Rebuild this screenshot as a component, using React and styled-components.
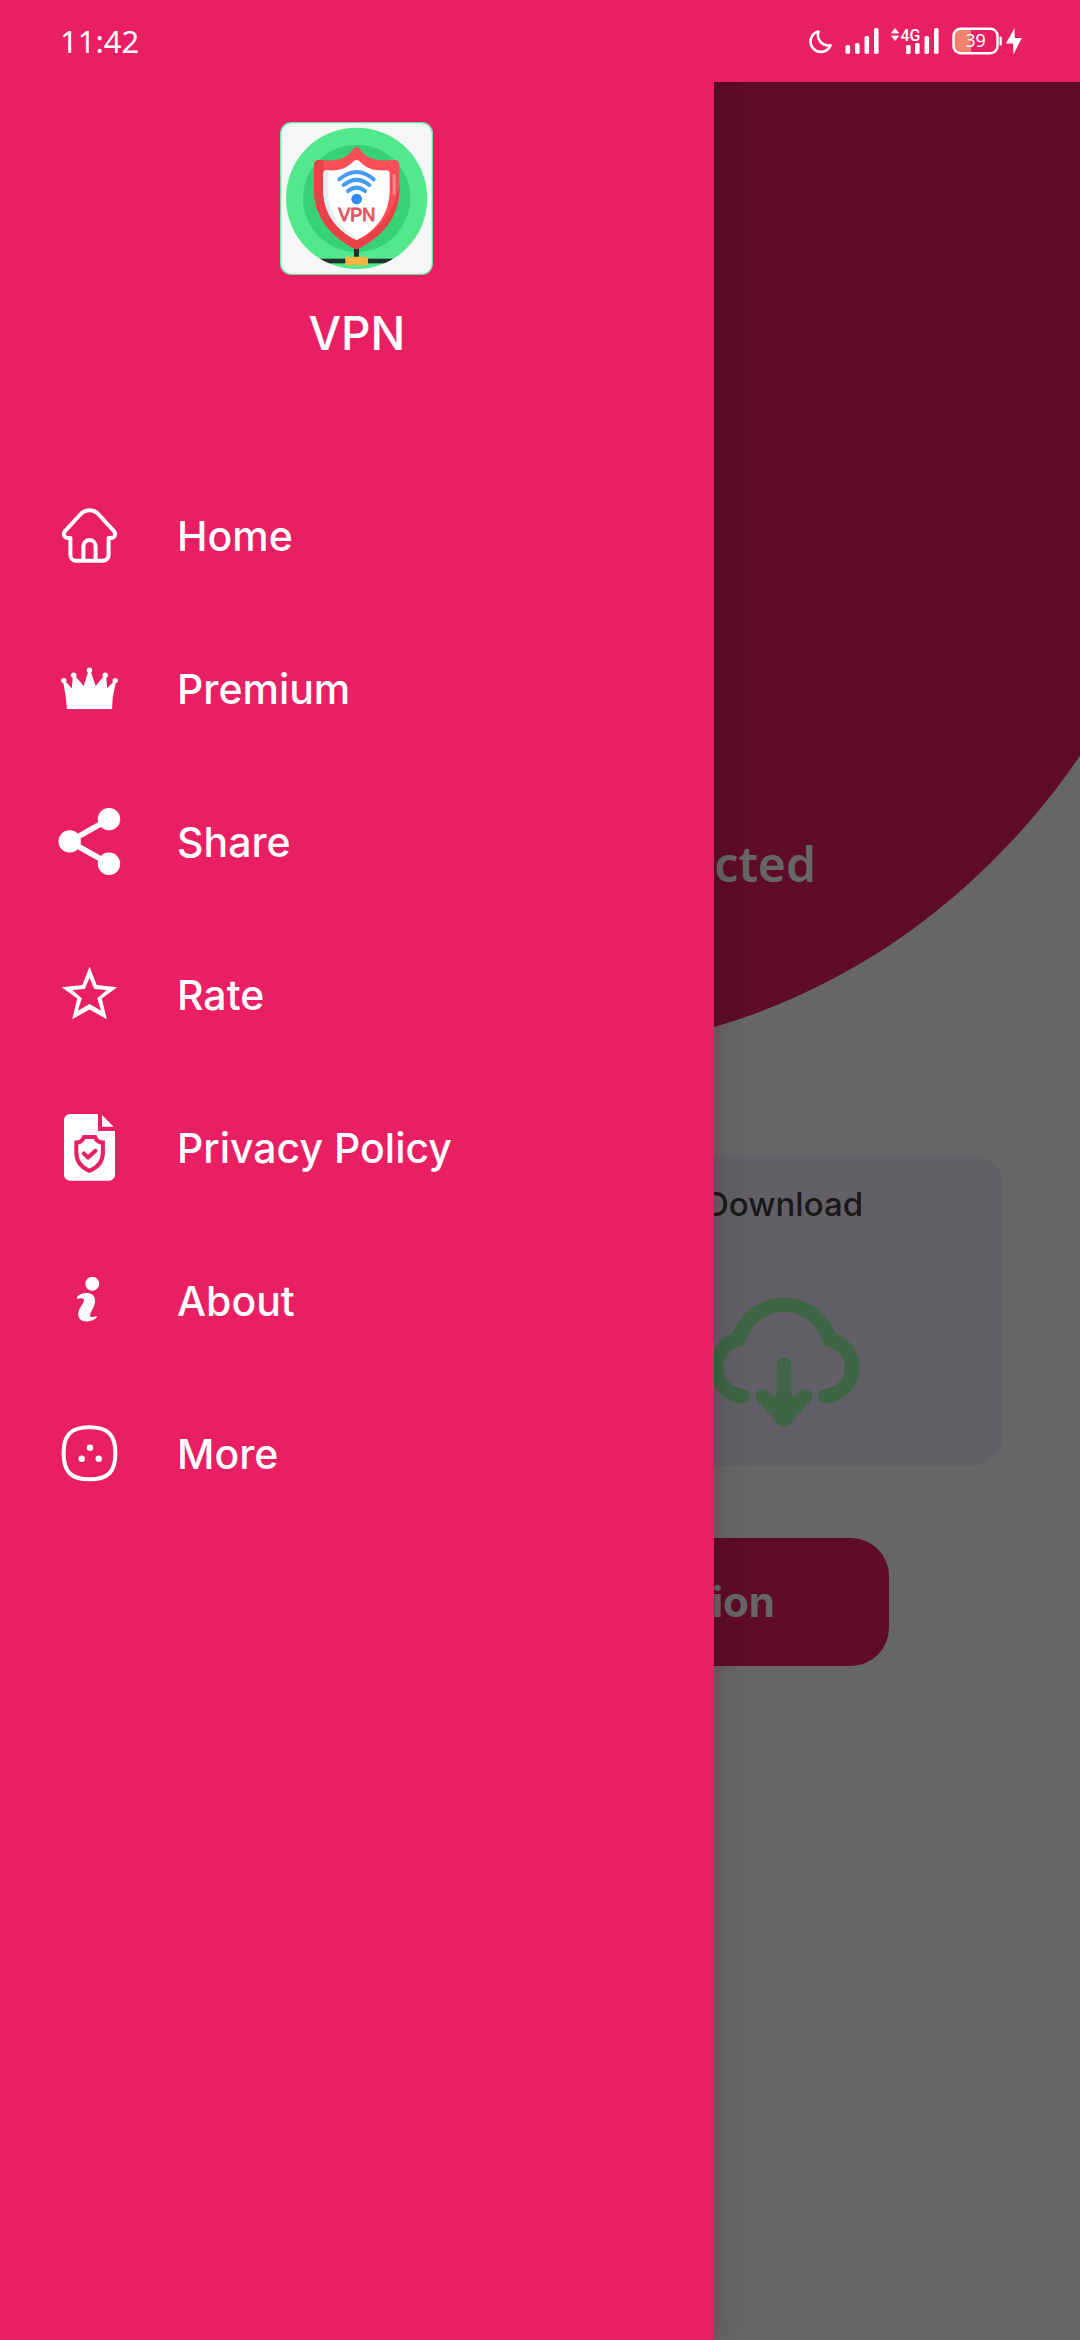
import React from 'react';
import styled, { createGlobalStyle } from 'styled-components';

const PINK = '#ea1e62';

const GlobalStyle = createGlobalStyle`
  *, *::before, *::after { box-sizing: border-box; }
  body {
    margin: 0;
    background: #fff;
    font-family: Inter, "Noto Sans", sans-serif;
  }
`;

const Page = styled.div`
  display: flex;
  flex-direction: column;
  min-height: 100vh;
`;

const StatusBar = styled.header`
  display: flex;
  align-items: center;
  justify-content: space-between;
  height: 82px;
  padding: 0 58px 0 60px;
  background: ${PINK};
  color: #fff;
  font-family: "Noto Sans", sans-serif;
  font-size: 31px;
`;

const StatusIcons = styled.div`
  display: flex;
  align-items: center;
  gap: 12px;
`;

const Power = styled.div`
  display: flex;
  align-items: center;
  gap: 4px;
`;

const Stage = styled.div`
  position: relative;
  display: flex;
  flex: 1;
  overflow: hidden;
`;

const Main = styled.main`
  flex: 1;
  min-width: 0;
`;

const Hero = styled.section`
  display: flex;
  flex-direction: column;
  justify-content: flex-end;
  height: 970px;
  margin: 0 -132px;
  padding: 0 396px 158px;
  border-radius: 0 0 50% 50% / 0 0 732px 732px;
  background: ${PINK};
`;

const HeroLabel = styled.p`
  margin: 0;
  color: #fff;
  font: 600 48px/60px "Noto Sans", sans-serif;
  text-align: right;
`;

const Cards = styled.section`
  display: grid;
  grid-template-columns: 1fr 1fr;
  gap: 50px;
  padding: 104px 77px 72px;
`;

const Card = styled.article`
  display: flex;
  flex-direction: column;
  align-items: center;
  gap: 73px;
  height: 310px;
  padding-top: 28px;
  border-radius: 30px;
  background: #f4f1ff;
`;

const CardTitle = styled.h2`
  margin: 0;
  color: #404040;
  font-size: 33px;
  font-weight: 500;
  line-height: 40px;
`;

const LocationButton = styled.button`
  display: flex;
  align-items: center;
  justify-content: flex-end;
  width: calc(100% - 382px);
  height: 128px;
  margin: 0 auto;
  padding: 0 114px;
  border: 0;
  border-radius: 38px;
  background: ${PINK};
  color: #fff;
  font: 700 42px/50px Inter, sans-serif;
  white-space: nowrap;
`;

const Scrim = styled.div`
  position: absolute;
  inset: 0;
  background: rgba(0, 0, 0, 0.6);
`;

const Drawer = styled.aside`
  position: absolute;
  top: 0;
  bottom: 0;
  left: 0;
  width: 66.1%;
  background: ${PINK};
  color: #fff;
  box-shadow: 0 0 32px rgba(0, 0, 0, 0.2);
`;

const Brand = styled.div`
  display: flex;
  flex-direction: column;
  align-items: center;
  gap: 28px;
  padding-top: 40px;
`;

const BrandName = styled.h1`
  margin: 0;
  font-size: 46px;
  font-weight: 500;
  line-height: 60px;
`;

const Menu = styled.nav`
  display: flex;
  flex-direction: column;
  padding-top: 96px;
`;

const MenuItem = styled.a`
  display: flex;
  align-items: center;
  gap: 54px;
  height: 153px;
  padding-left: 55px;
  color: inherit;
  font-size: 41px;
  font-weight: 500;
  line-height: 50px;
  text-decoration: none;
`;

function MenuIcon({ children }) {
  return (
    <svg width="68" height="68" viewBox="0 0 68 68" fill="none" stroke="#fff" strokeWidth="4" aria-hidden="true">
      {children}
    </svg>
  );
}

const items = [
  {
    label: 'Home',
    icon: (
      <>
        <path strokeLinejoin="round" d="M34.5 8.3C30.5 8.3 27.5 10 25.3 12.5L10 29.2C7.8 32 9 36 13 36h2.4v17.2a5.5 5.5 0 0 0 5.5 5.5h27.2a5.5 5.5 0 0 0 5.5-5.5V36H56c4 0 5.2-4 3-6.8L43.7 12.5C41.5 10 38.5 8.3 34.5 8.3Z" />
        <path d="M28.4 58V44.2a6.1 6.1 0 0 1 12.2 0V58" />
      </>
    ),
  },
  {
    label: 'Premium',
    icon: (
      <g fill="#fff" stroke="none">
        <path d="M12 54 10.6 41 8 26l1.6-.6 7.2 7.9L18 20h1.4l9.3 11 5-16h1.6l5.4 16 8.9-11h1.4l1.2 13.3 7.3-7.9 1.6.6-3.3 16L57 54Z" />
        <circle cx="8.8" cy="25.6" r="2.7" />
        <circle cx="18.7" cy="20.3" r="2.7" />
        <circle cx="34.5" cy="15.3" r="2.7" />
        <circle cx="50.3" cy="20.3" r="2.7" />
        <circle cx="60.2" cy="25.6" r="2.7" />
      </g>
    ),
  },
  {
    label: 'Share',
    icon: (
      <>
        <path strokeWidth="5.6" d="M54 11.2 14.7 33.4 54 55.8" />
        <g fill="#fff" stroke="none">
          <circle cx="14.7" cy="33.4" r="11.2" />
          <circle cx="54" cy="11.2" r="11.2" />
          <circle cx="54" cy="55.8" r="11.2" />
        </g>
      </>
    ),
  },
  {
    label: 'Rate',
    icon: (
      <path
        fill="#fff"
        stroke="none"
        fillRule="evenodd"
        d="M34.5 5.7 41.7 24 62.2 26.2 46.8 37.5 51.8 58.3 34.5 48.4 17.2 58.3 22.2 37.5 6.8 26.2 27.3 24ZM34.5 17 29.7 28 17.3 29 26.8 37.3 22.9 49.8 34.5 43 46.1 49.8 42.2 37.3 51.7 29 39.3 28Z"
      />
    ),
  },
  {
    label: 'Privacy Policy',
    icon: (
      <>
        <path fill="#fff" stroke="none" d="M15 0H43V17H60V60.7a6 6 0 0 1-6 6H15a6 6 0 0 1-6-6V6a6 6 0 0 1 6-6ZM47 1 58.7 12.7H47Z" />
        <path stroke={PINK} d="M29 23H40C41.2 26.3 44 28.5 47.9 28.5V38.5C47.9 47 42.5 53.5 34.5 56.8 26.5 53.5 21.3 47 21.3 38.5V28.5C25 28.5 27.8 26.3 29 23Z" />
        <path stroke={PINK} strokeLinecap="round" strokeLinejoin="round" d="M28.8 39.4 33 43.6 40.5 36.8" />
      </>
    ),
  },
  {
    label: 'About',
    icon: (
      <g fill="#fff" stroke="none">
        <circle cx="37.3" cy="16.7" r="7" />
        <path d="M22 32C21.5 28.5 26 26 32 26 38 26 40.5 30 40 35 39.5 40 36 44 35 48 34.6 50.8 38.5 50.3 41.5 49 43.5 50.5 37 54.5 32 54.5 26 54.5 22.8 51 23.3 46 24 41 28 38 29 33.5 29 30.5 25 31 22 32Z" />
      </g>
    ),
  },
  {
    label: 'More',
    icon: (
      <>
        <path d="M34.5 7.3C53 7.3 60.4 14.8 60.4 33.3S53 59.3 34.5 59.3 8.6 51.8 8.6 33.3 16 7.3 34.5 7.3Z" />
        <g fill="#fff" stroke="none">
          <circle cx="35" cy="27.7" r="3.2" />
          <circle cx="26.7" cy="38.7" r="3.2" />
          <circle cx="43.7" cy="38.7" r="3.2" />
        </g>
      </>
    ),
  },
];

function Logo() {
  return (
    <svg width="153" height="153" viewBox="60 36 459 459" role="img" aria-label="VPN logo">
      <defs>
        <clipPath id="disc"><circle cx="290" cy="265" r="212" /></clipPath>
      </defs>
      <rect x="62" y="38" width="455" height="455" rx="32" fill="#f6f6f6" stroke="#6fe3a3" strokeWidth="4" />
      <circle cx="290" cy="265" r="212" fill="#52e98d" />
      <circle cx="290" cy="265" r="161" fill="#37d277" />
      <g clipPath="url(#disc)">
        <rect x="60" y="446" width="460" height="14" fill="#22302e" />
        <rect x="282" y="410" width="15" height="36" fill="#22302e" />
      </g>
      <rect x="256" y="440" width="68" height="26" rx="4" fill="#fbb540" />
      <path fill="#fa4f58" d="M290 111C301 111 302 126 320 138 342 152 368 153 400 150 411 149 418 155 418 166V240C418 320 365 385 290 418 215 385 162 320 162 240V166C162 155 169 149 180 150 212 153 238 152 260 138 278 126 279 111 290 111Z" />
      <path fill="#ea4048" d="M180 150C169 149 162 155 162 166V240C162 320 215 385 290 418 365 385 418 320 418 240V225C400 310 355 365 290 390 225 360 190 310 190 240V151Z" />
      <path fill="#fff" d="M290 150C300 150 304 164 326 174 342 181 360 182 378 181 386 181 389 184 389 192V240C389 310 350 362 290 390 230 362 190 310 190 240V192C190 184 193 181 201 181 219 182 237 181 253 174 275 164 280 150 290 150Z" />
      <path fill="#e3eff5" d="M201 181C193 181 190 184 190 192V240C190 310 230 362 290 390L294 386C240 355 205 310 205 240V181Z" />
      <rect x="398" y="192" width="9" height="62" rx="4" fill="#ff858b" />
      <g fill="none" stroke="#459bf0" strokeWidth="12" strokeLinecap="round">
        <path d="M238 208Q290 164 341 208" />
        <path d="M251 225Q290 194 328 225" />
        <path d="M264 243Q290 223 315 243" />
      </g>
      <circle cx="290" cy="267" r="16" fill="#3288f2" />
      <text x="290" y="334" textAnchor="middle" fill="#e25560" stroke="#e25560" strokeWidth="3" fontFamily="Liberation Sans, sans-serif" fontSize="54" fontWeight="400">VPN</text>
    </svg>
  );
}

function CloudIcon({ up }) {
  return (
    <svg width="156" height="131" viewBox="50 500 466 392" fill="none" stroke="#9bfcac" strokeWidth="44" strokeLinecap="round" aria-hidden="true">
      <path d="M406 797A86 86 0 0 0 419 627A141 141 0 0 0 147 627A86 86 0 0 0 160 797" />
      <g transform={up ? 'rotate(180 283 785)' : undefined}>
        <path d="M283 703V860" />
        <path strokeLinejoin="round" fill="#9bfcac" d="M219 797 283 867 347 797" />
      </g>
    </svg>
  );
}

function Moon() {
  return (
    <svg width="24" height="28" viewBox="0 0 24 28" fill="none" stroke="#fff" strokeWidth="2.6" strokeLinejoin="round" aria-hidden="true">
      <path d="M9.5 4.5A10.3 10.3 0 1 0 21.5 18.2 10.5 10.5 0 0 1 9.5 4.5Z" />
    </svg>
  );
}

function Signal() {
  return (
    <svg width="34" height="28" viewBox="0 0 34 28" fill="#fff" aria-hidden="true">
      <rect x="0.5" y="18" width="4.6" height="9" rx="1.8" />
      <rect x="10" y="16" width="4.6" height="11" rx="1.8" />
      <rect x="19.5" y="9" width="4.6" height="18" rx="1.8" />
      <rect x="29" y="1" width="4.6" height="26" rx="1.8" />
    </svg>
  );
}

function Signal4G() {
  return (
    <svg width="49" height="40" viewBox="0 -6 49 40" fill="#fff" aria-label="4G">
      <path d="M0.5 6 4 1.5 7.5 6ZM0.5 9 4 13.5 7.5 9Z" stroke="#fff" strokeWidth="0.8" strokeLinejoin="round" />
      <text x="9.5" y="13.5" fontFamily="Roboto, sans-serif" fontSize="16" fontWeight="500">4G</text>
      <rect x="15" y="18" width="4.6" height="9" rx="1.5" />
      <rect x="24" y="16" width="4.6" height="11" rx="1.5" />
      <rect x="33.5" y="9" width="4.6" height="18" rx="1.8" />
      <rect x="43" y="1" width="4.6" height="26" rx="1.8" />
    </svg>
  );
}

function Battery() {
  return (
    <svg width="50" height="28" viewBox="0 0 50 28" aria-label="Battery 39 percent">
      <path d="M8 2H19V26H8A6 6 0 0 1 2 20V8A6 6 0 0 1 8 2Z" fill="#f6806e" />
      <rect x="1.5" y="1.8" width="44" height="24.4" rx="7" fill="none" stroke="#fff" strokeWidth="2.4" />
      <rect x="47.5" y="9.5" width="2.3" height="9" rx="1" fill="#fff" />
      <text x="23.5" y="19.5" textAnchor="middle" fill="#fff" fontFamily="Noto Sans, sans-serif" fontSize="18">39</text>
    </svg>
  );
}

function Bolt() {
  return (
    <svg width="16" height="28" viewBox="0 0 16 28" fill="#fff" aria-hidden="true">
      <path d="M8.5 1 0 16.5H7L7.5 27.5 15.8 11H8.8Z" />
    </svg>
  );
}

export default function App() {
  return (
    <>
      <GlobalStyle />
      <Page>
        <StatusBar>
          <time>11:42</time>
          <StatusIcons>
            <Moon />
            <Signal />
            <Signal4G />
            <Power>
              <Battery />
              <Bolt />
            </Power>
          </StatusIcons>
        </StatusBar>
        <Stage>
          <Main>
            <Hero>
              <HeroLabel>Disconnected</HeroLabel>
            </Hero>
            <Cards>
              <Card>
                <CardTitle>Upload</CardTitle>
                <CloudIcon up />
              </Card>
              <Card>
                <CardTitle>Download</CardTitle>
                <CloudIcon />
              </Card>
            </Cards>
            <LocationButton type="button">Select Location</LocationButton>
          </Main>
          <Scrim />
          <Drawer>
            <Brand>
              <Logo />
              <BrandName>VPN</BrandName>
            </Brand>
            <Menu aria-label="Main menu">
              {items.map(({ label, icon }) => (
                <MenuItem href="#" key={label}>
                  <MenuIcon>{icon}</MenuIcon>
                  {label}
                </MenuItem>
              ))}
            </Menu>
          </Drawer>
        </Stage>
      </Page>
    </>
  );
}
